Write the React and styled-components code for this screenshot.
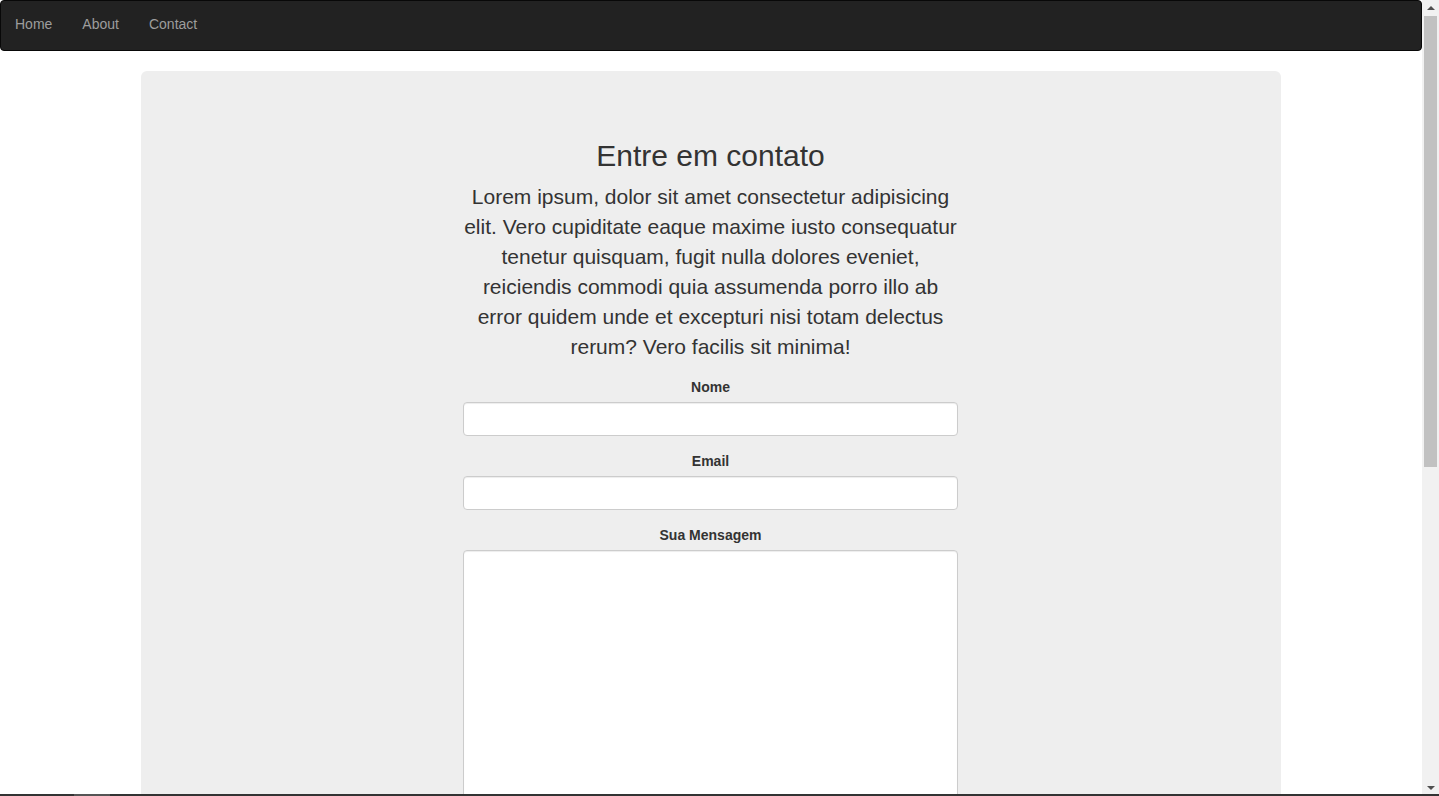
import React from "react";
import styled, { createGlobalStyle } from "styled-components";

const Global = createGlobalStyle`
  * { box-sizing: border-box; }
  html, body { margin: 0; padding: 0; height: 100%; overflow: hidden; }
  body {
    font-family: "Liberation Sans", Arial, Helvetica, sans-serif;
    font-size: 14px;
    line-height: 1.42857143;
    color: #333;
    background: #fff;
  }
`;

const Frame = styled.div`
  display: flex;
  height: 100vh;
  width: 100vw;
  overflow: hidden;
`;

const Viewport = styled.div`
  flex: 1;
  min-width: 0;
  overflow: hidden;
`;

const Navbar = styled.nav`
  height: 51px;
  background: #222;
  border: 1px solid #080808;
  border-radius: 4px;
  margin-bottom: 20px;
  display: flex;
  align-items: flex-start;
`;

const NavList = styled.ul`
  list-style: none;
  margin: 0 0 0 -1px;
  padding: 0;
  display: flex;
`;

const NavLink = styled.a`
  display: block;
  padding: 13px 15px 16px;
  line-height: 20px;
  color: #9d9d9d;
  text-decoration: none;
  font-size: 14px;
`;

const Container = styled.div`
  width: 1170px;
  margin: 0 auto;
  padding: 0 15px;
`;

const Jumbotron = styled.div`
  background: #eee;
  border-radius: 6px;
  padding: 48px 60px 48px 322px;
  display: flex;
  justify-content: flex-start;
  text-align: center;
`;

const Column = styled.div`
  width: 495px;
`;

const Title = styled.h2`
  font-size: 30px;
  font-weight: 500;
  line-height: 1.1;
  margin: 20px 0 10px;
  color: #333;
`;

const Lead = styled.p`
  font-size: 21px;
  font-weight: 200;
  line-height: 30px;
  margin: 0 0 15px;
`;

const Group = styled.div`
  margin-bottom: 15px;
  display: flex;
  flex-direction: column;
`;

const Label = styled.label`
  font-weight: bold;
  display: block;
  margin-bottom: 5px;
  line-height: 20px;
  font-size: 14px;
`;

const Input = styled.input`
  display: block;
  width: 100%;
  height: 34px;
  padding: 6px 12px;
  font-size: 14px;
  font-family: inherit;
  color: #555;
  background: #fff;
  border: 1px solid #ccc;
  border-radius: 4px;
  box-shadow: inset 0 1px 1px rgba(0, 0, 0, 0.075);
  outline: none;
`;

const TextArea = styled(Input).attrs({ as: "textarea" })`
  height: ${(p) => p.$h}px;
  resize: vertical;
`;

const Scrollbar = styled.div`
  width: 17px;
  flex: none;
  background: #f1f1f1;
  display: flex;
  flex-direction: column;
  align-items: center;
`;

const Arrow = styled.div`
  height: 16px;
  width: 17px;
  display: flex;
  align-items: center;
  justify-content: center;
  &::after {
    content: "";
    width: 0;
    height: 0;
    border-left: 4px solid transparent;
    border-right: 4px solid transparent;
    ${(p) =>
      p.$down
        ? "border-top: 4px solid #505050;"
        : "border-bottom: 4px solid #505050;"}
  }
`;

const Track = styled.div`
  flex: 1;
  width: 100%;
  padding: 0 2px;
`;

const Thumb = styled.div`
  height: 451px;
  background: #c1c1c1;
`;

const BottomEdge = styled.div`
  position: fixed;
  left: 0;
  right: 0;
  bottom: 0;
  height: 2px;
  background: #333;
  &::after {
    content: "";
    position: absolute;
    left: 74px;
    width: 36px;
    top: 0;
    bottom: 0;
    background: #555;
  }
`;

export default function App() {
  return (
    <>
      <Global />
      <Frame>
        <Viewport>
          <Navbar>
            <NavList>
              <li><NavLink href="#">Home</NavLink></li>
              <li><NavLink href="#">About</NavLink></li>
              <li><NavLink href="#">Contact</NavLink></li>
            </NavList>
          </Navbar>
          <Container>
            <Jumbotron>
              <Column>
                <Title>Entre em contato</Title>
                <Lead>
                  Lorem ipsum, dolor sit amet consectetur adipisicing elit. Vero
                  cupiditate eaque maxime iusto consequatur tenetur quisquam,
                  fugit nulla dolores eveniet, reiciendis commodi quia assumenda
                  porro illo ab error quidem unde et excepturi nisi totam
                  delectus rerum? Vero facilis sit minima!
                </Lead>
                <form>
                  <Group>
                    <Label htmlFor="nome">Nome</Label>
                    <Input id="nome" type="text" />
                  </Group>
                  <Group>
                    <Label htmlFor="email">Email</Label>
                    <Input id="email" type="email" />
                  </Group>
                  <Group>
                    <Label htmlFor="msg">Sua Mensagem</Label>
                    <TextArea id="msg" $h={300} />
                  </Group>
                </form>
              </Column>
            </Jumbotron>
          </Container>
        </Viewport>
        <Scrollbar>
          <Arrow />
          <Track>
            <Thumb />
          </Track>
          <Arrow $down />
        </Scrollbar>
      </Frame>
      <BottomEdge />
    </>
  );
}
